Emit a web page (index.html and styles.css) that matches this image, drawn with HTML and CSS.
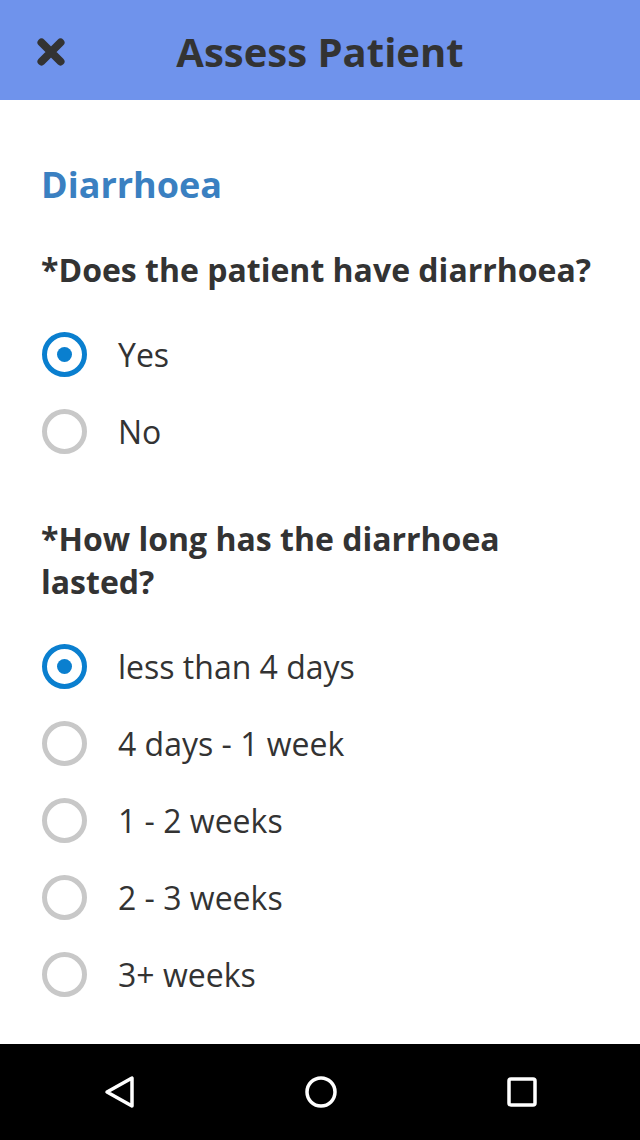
FILE: index.html
```html
<!DOCTYPE html>
<html>
<head>
<meta charset="utf-8">
<link rel="stylesheet" href="styles.css">
</head>
<body>
<div class="screen">
  <header class="topbar">
    <svg class="close" width="30" height="30" viewBox="0 0 30 30">
      <path d="M5.5 5.5 L24.5 24.5 M24.5 5.5 L5.5 24.5" stroke="#333" stroke-width="8" stroke-linecap="round"/>
    </svg>
    <h1 class="title">Assess Patient</h1>
  </header>
  <main class="content">
    <h2 class="section">Diarrhoea</h2>
    <div class="question">
      <p class="qtext">*Does the patient have diarrhoea?</p>
      <ul class="options">
        <li class="option"><span class="radio checked"></span><span class="label">Yes</span></li>
        <li class="option"><span class="radio"></span><span class="label">No</span></li>
      </ul>
    </div>
    <div class="question">
      <p class="qtext">*How long has the diarrhoea lasted?</p>
      <ul class="options">
        <li class="option"><span class="radio checked"></span><span class="label">less than 4 days</span></li>
        <li class="option"><span class="radio"></span><span class="label">4 days - 1 week</span></li>
        <li class="option"><span class="radio"></span><span class="label">1 - 2 weeks</span></li>
        <li class="option"><span class="radio"></span><span class="label">2 - 3 weeks</span></li>
        <li class="option"><span class="radio"></span><span class="label">3+ weeks</span></li>
      </ul>
    </div>
  </main>
  <nav class="navbar">
    <svg width="36" height="36" viewBox="0 0 36 36"><path d="M31 4 L31 32 L6 18 Z" fill="none" stroke="#fff" stroke-width="3.5" stroke-linejoin="round"/></svg>
    <svg width="36" height="36" viewBox="0 0 36 36"><circle cx="18" cy="18" r="14" fill="none" stroke="#fff" stroke-width="3.5"/></svg>
    <svg width="36" height="36" viewBox="0 0 36 36"><rect x="5" y="5" width="26" height="26" rx="2" fill="none" stroke="#fff" stroke-width="3.5"/></svg>
  </nav>
</div>
</body>
</html>
```
FILE: styles.css
```css
html, body {
  margin: 0;
  padding: 0;
  background: #fff;
}
.screen {
  width: 640px;
  height: 1140px;
  display: flex;
  flex-direction: column;
  font-family: "Open Sans", "Noto Sans", sans-serif;
  color: #333;
}
.topbar {
  height: 100px;
  flex: none;
  background: #6f93ec;
  display: flex;
  align-items: center;
  position: relative;
}
.close {
  position: absolute;
  left: 36px;
  top: 37px;
}
.title {
  margin: 4px 0 0;
  width: 100%;
  text-align: center;
  font-size: 40px;
  font-weight: 700;
  color: #333;
  line-height: 1;
}
.content {
  flex: 1;
  padding: 0 40px 0 41px;
}
.section {
  margin: 63px 0 0;
  font-size: 36px;
  font-weight: 700;
  color: #3a80c1;
  line-height: 44px;
}
.qtext {
  margin: 41px 0 0;
  font-size: 32px;
  font-weight: 700;
  line-height: 43px;
  color: #333;
}
.question + .question .qtext {
  margin-top: 47px;
}
.options {
  list-style: none;
  margin: 25px 0 0;
  padding: 0;
}
.option {
  height: 77px;
  display: flex;
  align-items: center;
}
.radio {
  box-sizing: border-box;
  width: 45px;
  height: 45px;
  margin-left: 1px;
  border-radius: 50%;
  border: 5px solid #c8c8c8;
  display: flex;
  align-items: center;
  justify-content: center;
  flex: none;
}
.radio.checked {
  border-color: #0a7fcf;
}
.radio.checked::after {
  content: "";
  width: 15px;
  height: 15px;
  border-radius: 50%;
  background: #0a7fcf;
}
.label {
  margin-left: 31px;
  font-size: 32px;
  line-height: 44px;
  color: #333;
}
.navbar {
  height: 96px;
  flex: none;
  background: #000;
  display: flex;
  align-items: center;
  justify-content: space-between;
  padding: 0 100px 0 101px;
}
```
